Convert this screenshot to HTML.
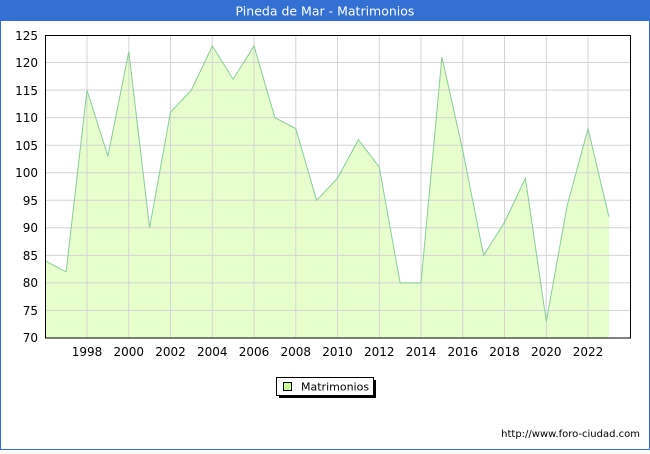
<!DOCTYPE html>
<html><head><style>
body{margin:0;width:650px;height:450px;overflow:hidden;background:#fff;font-family:"DejaVu Sans","Liberation Sans",sans-serif;}
</style></head><body>
<svg width="650" height="450" xmlns="http://www.w3.org/2000/svg" font-family="DejaVu Sans, Liberation Sans, sans-serif">
<rect x="0" y="0" width="650" height="450" fill="#fff"/>
<rect x="0.5" y="0.5" width="649" height="449" fill="none" stroke="#3370d4"/>
<rect x="0" y="0" width="650" height="21" fill="#3370d4"/>
<text x="325" y="15.5" fill="#fff" font-size="12.5" text-anchor="middle">Pineda de Mar - Matrimonios</text>
<polygon fill="#e6ffcc" stroke="none" points="45.3,338 45.3,260.9 66.1,271.9 87,90.1 107.9,156.2 128.8,51.5 149.6,227.8 170.5,112.1 191.4,90.1 212.3,46 233.1,79.1 254,46 274.9,117.6 295.8,128.7 316.6,200.3 337.5,178.2 358.4,139.7 379.3,167.2 400.1,282.9 421,282.9 441.9,57 462.8,150.7 483.6,255.4 504.5,222.3 525.4,178.2 546.3,321.5 567.1,205.8 588,128.7 608.9,216.8 608.9,338"/>
<g stroke="#d4d4d4" stroke-width="1">
<line x1="45" x2="630" y1="62.5" y2="62.5"/><line x1="45" x2="630" y1="90.1" y2="90.1"/><line x1="45" x2="630" y1="117.6" y2="117.6"/><line x1="45" x2="630" y1="145.2" y2="145.2"/><line x1="45" x2="630" y1="172.7" y2="172.7"/><line x1="45" x2="630" y1="200.3" y2="200.3"/><line x1="45" x2="630" y1="227.8" y2="227.8"/><line x1="45" x2="630" y1="255.4" y2="255.4"/><line x1="45" x2="630" y1="282.9" y2="282.9"/><line x1="45" x2="630" y1="310.5" y2="310.5"/>
<line x1="87" x2="87" y1="35" y2="338"/><line x1="128.8" x2="128.8" y1="35" y2="338"/><line x1="170.5" x2="170.5" y1="35" y2="338"/><line x1="212.3" x2="212.3" y1="35" y2="338"/><line x1="254" x2="254" y1="35" y2="338"/><line x1="295.8" x2="295.8" y1="35" y2="338"/><line x1="337.5" x2="337.5" y1="35" y2="338"/><line x1="379.3" x2="379.3" y1="35" y2="338"/><line x1="421" x2="421" y1="35" y2="338"/><line x1="462.8" x2="462.8" y1="35" y2="338"/><line x1="504.5" x2="504.5" y1="35" y2="338"/><line x1="546.3" x2="546.3" y1="35" y2="338"/><line x1="588" x2="588" y1="35" y2="338"/>
</g>
<polyline fill="none" stroke="#88cc99" stroke-width="1" points="45.3,260.9 66.1,271.9 87,90.1 107.9,156.2 128.8,51.5 149.6,227.8 170.5,112.1 191.4,90.1 212.3,46 233.1,79.1 254,46 274.9,117.6 295.8,128.7 316.6,200.3 337.5,178.2 358.4,139.7 379.3,167.2 400.1,282.9 421,282.9 441.9,57 462.8,150.7 483.6,255.4 504.5,222.3 525.4,178.2 546.3,321.5 567.1,205.8 588,128.7 608.9,216.8"/>
<rect x="45.5" y="35.5" width="585" height="302.5" fill="none" stroke="#000"/>
<g font-size="12" fill="#000" text-anchor="end">
<text x="38" y="40">125</text><text x="38" y="67">120</text><text x="38" y="95">115</text><text x="38" y="122">110</text><text x="38" y="150">105</text><text x="38" y="177">100</text><text x="38" y="205">95</text><text x="38" y="232">90</text><text x="38" y="260">85</text><text x="38" y="287">80</text><text x="38" y="315">75</text><text x="38" y="342">70</text>
</g>
<g font-size="12" fill="#000" text-anchor="middle">
<text x="87" y="356">1998</text><text x="128.8" y="356">2000</text><text x="170.5" y="356">2002</text><text x="212.3" y="356">2004</text><text x="254" y="356">2006</text><text x="295.8" y="356">2008</text><text x="337.5" y="356">2010</text><text x="379.3" y="356">2012</text><text x="421" y="356">2014</text><text x="462.8" y="356">2016</text><text x="504.5" y="356">2018</text><text x="546.3" y="356">2020</text><text x="588" y="356">2022</text>
</g>
<rect x="279" y="380" width="97" height="18" fill="#000"/>
<rect x="276.5" y="377.5" width="97" height="18" fill="#fff" stroke="#000"/>
<rect x="283.5" y="382.5" width="8" height="8" fill="#ccff99" stroke="#000"/>
<text x="301" y="390.5" font-size="11" fill="#000">Matrimonios</text>
<text x="640" y="437" font-size="10" fill="#000" text-anchor="end">http://www.foro-ciudad.com</text>
</svg>
</body></html>
